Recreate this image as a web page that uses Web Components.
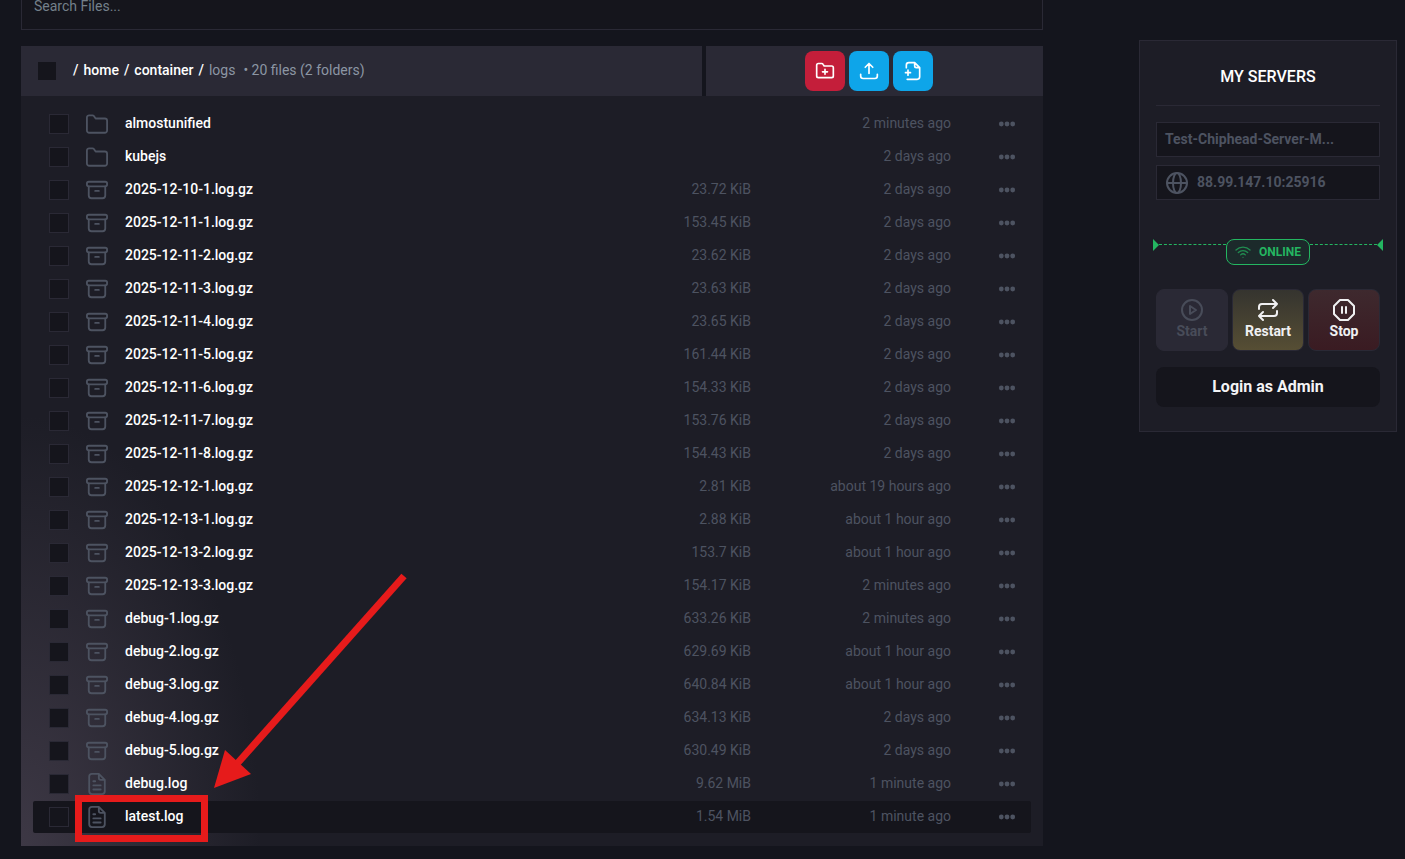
<!DOCTYPE html>
<html lang="en">
<head>
<meta charset="utf-8">
<title>File Manager</title>
<style>
    :root {
        --page: #14151d;
        --panel: #1d1d26;
        --raised: #2a2935;
        --field: #15151c;
        --muted: #4d5361;
        --soft: #8c96a4;
        --red: #c41e3a;
        --blue: #0ea5e9;
        --green: #24b661;
    }

    body {
        margin: 0;
        background: var(--page);
        color: #fff;
        font-family: Roboto, "Liberation Sans", sans-serif;
        font-size: 14px;
        line-height: 20px;
    }
</style>
</head>
<body>
<file-page>
    <search-field slot="main"></search-field>
    <path-bar slot="main">
        <action-button icon="folder-plus" label="New folder" tone="red"></action-button>
        <action-button icon="upload" label="Upload"></action-button>
        <action-button icon="file-plus" label="New file"></action-button>
    </path-bar>
    <file-table slot="main"></file-table>
    <red-marker slot="main"></red-marker>
    <server-card slot="side">
        <span slot="title">MY SERVERS</span>
        <power-button slot="power" icon="play" tone="start" off>Start</power-button>
        <power-button slot="power" icon="repeat" tone="restart">Restart</power-button>
        <power-button slot="power" icon="pause" tone="stop">Stop</power-button>
    </server-card>
</file-page>

<script>
const ICONS = {
    'folder': '<path d="M1 19V5a2.500 2.500 0 0 1 2.500-2.500H7a2 2 0 0 1 1.600.8L10.500 6H20.500A2.500 2.500 0 0 1 23 8.500V19a2.500 2.500 0 0 1-2.500 2.500h-17A2.500 2.500 0 0 1 1 19z"/>',
    'archive': '<rect x="1" y="3" width="22" height="5" rx="2"/><path d="M3 8v10a3 3 0 0 0 3 3h12a3 3 0 0 0 3-3V8M10 13h4"/>',
    'file': '<path d="M14 1H6.500a3 3 0 0 0-3 3v16a3 3 0 0 0 3 3h11a3 3 0 0 0 3-3V7.500L14 1zM14 1v4.500a2 2 0 0 0 2 2h4.500M8 9h2M8 13.500h8M8 18h8"/>',
    'dots': '<g fill="currentColor" stroke="none"><circle cx="6.300" cy="12" r="2.400"/><circle cx="12" cy="12" r="2.400"/><circle cx="17.700" cy="12" r="2.400"/></g>',
    'folder-plus': '<path d="M2 18V5a2 2 0 0 1 2-2h4a2 2 0 0 1 1.700 1L11 6h9a2 2 0 0 1 2 2v10a2 2 0 0 1-2 2H4a2 2 0 0 1-2-2zM12 10v6M9 13h6"/>',
    'upload': '<path d="M12 15V3M7.500 7.500L12 3l4.500 4.500M2 16v2a3 3 0 0 0 3 3h14a3 3 0 0 0 3-3v-2"/>',
    'file-plus': '<path d="M4 8V5a3 3 0 0 1 3-3h7l6 6v11a3 3 0 0 1-3 3H5M14 2v4a2 2 0 0 0 2 2h4M6 11v6M3 14h6"/>',
    'globe': '<circle cx="12" cy="12" r="10"/><ellipse cx="12" cy="12" rx="4" ry="10"/><path d="M2 12h20"/>',
    'wifi': '<path d="M1.500 9a15 15 0 0 1 21 0M5 12.800a10 10 0 0 1 14 0M8.500 16.300a5 5 0 0 1 7 0M12 20h.01"/>',
    'play': '<circle cx="12" cy="12" r="10"/><path d="M10 8l6 4-6 4z"/>',
    'repeat': '<path d="M17 2l4 4-4 4M3 11V9a3 3 0 0 1 3-3h15M7 22l-4-4 4-4M21 13v2a3 3 0 0 1-3 3H3"/>',
    'pause': '<path d="M8 2h8l6 6v8l-6 6H8l-6-6V8zM10 9v6M14 9v6"/>'
};

class UiIcon extends HTMLElement {
    constructor() {
        super();
        this.attachShadow({ mode: 'open' });
    }

    connectedCallback() {
        this.shadowRoot.innerHTML = `
        <style>
            :host { display: inline-block; width: 24px; height: 24px; flex: none; }
            svg { display: block; width: 100%; height: 100%; overflow: visible; fill: none; stroke: currentColor; stroke-width: 2; stroke-linecap: round; stroke-linejoin: round; }
        </style>
        <svg viewBox="0 0 24 24" aria-hidden="true">${ICONS[this.getAttribute('name')]}</svg>
        `;
    }
}

class FilePage extends HTMLElement {
    constructor() {
        super();
        this.attachShadow({ mode: 'open' });
        this.shadowRoot.innerHTML = `
        <style>
            :host { display: flex; align-items: flex-start; gap: 96px; padding: 0 8px 12px 21px; }
            main { position: relative; flex: 1; min-width: 0; }
            aside { flex: none; width: 258px; padding-top: 40px; box-sizing: border-box; }
        </style>
        <main><slot name="main"></slot></main>
        <aside><slot name="side"></slot></aside>
        `;
    }
}

class SearchField extends HTMLElement {
    constructor() {
        super();
        this.attachShadow({ mode: 'open' });
        // the field is scrolled half out of view, so it hangs from the bottom of its box
        this.shadowRoot.innerHTML = `
        <style>
            :host { display: flex; align-items: flex-end; height: 30px; overflow: hidden; margin-bottom: 16px; }
            input { box-sizing: border-box; flex: none; width: 100%; height: 48px; padding: 0 12px; border: 1px solid var(--raised); border-radius: 0; background: var(--field); color: #fff; font: inherit; outline: 0; }
            input::placeholder { color: #74808a; opacity: 1; }
        </style>
        <input type="search" placeholder="Search Files..." aria-label="Search files">
        `;
    }
}

class PathBar extends HTMLElement {
    constructor() {
        super();
        this.attachShadow({ mode: 'open' });
        this.shadowRoot.innerHTML = `
        <style>
            :host { display: grid; grid-template-columns: 1fr 337px; gap: 4px; height: 50px; }
            nav, .actions { display: flex; align-items: center; background: var(--raised); }
            nav { padding: 0 16px; }
            input { appearance: none; width: 18px; height: 18px; margin: 0 17px 0 1px; background: var(--field); }
            p { display: flex; gap: 5px; margin: 0; padding-bottom: 2px; font-weight: 500; }
            a { color: #fff; text-decoration: none; }
            .here, .count { color: var(--soft); font-weight: 400; }
            .count { margin-left: 3px; }
            .actions { justify-content: center; gap: 4px; padding-right: 12px; }
        </style>
        <nav aria-label="Path">
            <input type="checkbox" aria-label="Select all files">
            <p><span>/</span><a href="#home">home</a><span>/</span><a href="#container">container</a><span>/</span><span class="here">logs</span><span class="count">• 20 files (2 folders)</span></p>
        </nav>
        <div class="actions"><slot></slot></div>
        `;
    }
}

class ActionButton extends HTMLElement {
    constructor() {
        super();
        this.attachShadow({ mode: 'open' });
    }

    connectedCallback() {
        this.shadowRoot.innerHTML = `
        <style>
            :host { display: block; }
            button { display: flex; align-items: center; justify-content: center; width: 40px; height: 40px; padding: 0; border: 0; border-radius: 8px; background: var(--blue); color: #fff; }
            :host([tone="red"]) button { background: var(--red); }
            ui-icon { width: 20px; height: 20px; }
        </style>
        <button type="button" aria-label="${this.getAttribute('label')}"><ui-icon name="${this.getAttribute('icon')}"></ui-icon></button>
        `;
    }
}

const FILES = [
    ['folder', 'almostunified', '', '2 minutes ago'],
    ['folder', 'kubejs', '', '2 days ago'],
    ['archive', '2025-12-10-1.log.gz', '23.72 KiB', '2 days ago'],
    ['archive', '2025-12-11-1.log.gz', '153.45 KiB', '2 days ago'],
    ['archive', '2025-12-11-2.log.gz', '23.62 KiB', '2 days ago'],
    ['archive', '2025-12-11-3.log.gz', '23.63 KiB', '2 days ago'],
    ['archive', '2025-12-11-4.log.gz', '23.65 KiB', '2 days ago'],
    ['archive', '2025-12-11-5.log.gz', '161.44 KiB', '2 days ago'],
    ['archive', '2025-12-11-6.log.gz', '154.33 KiB', '2 days ago'],
    ['archive', '2025-12-11-7.log.gz', '153.76 KiB', '2 days ago'],
    ['archive', '2025-12-11-8.log.gz', '154.43 KiB', '2 days ago'],
    ['archive', '2025-12-12-1.log.gz', '2.81 KiB', 'about 19 hours ago'],
    ['archive', '2025-12-13-1.log.gz', '2.88 KiB', 'about 1 hour ago'],
    ['archive', '2025-12-13-2.log.gz', '153.7 KiB', 'about 1 hour ago'],
    ['archive', '2025-12-13-3.log.gz', '154.17 KiB', '2 minutes ago'],
    ['archive', 'debug-1.log.gz', '633.26 KiB', '2 minutes ago'],
    ['archive', 'debug-2.log.gz', '629.69 KiB', 'about 1 hour ago'],
    ['archive', 'debug-3.log.gz', '640.84 KiB', 'about 1 hour ago'],
    ['archive', 'debug-4.log.gz', '634.13 KiB', '2 days ago'],
    ['archive', 'debug-5.log.gz', '630.49 KiB', '2 days ago'],
    ['file', 'debug.log', '9.62 MiB', '1 minute ago'],
    ['file', 'latest.log', '1.54 MiB', '1 minute ago']
];

class FileTable extends HTMLElement {
    constructor() {
        super();
        this.attachShadow({ mode: 'open' });
        const rows = FILES.map(([icon, name, size, date]) => `
            <tr${name === 'latest.log' ? ' class="active"' : ''}>
                <td class="check"><input type="checkbox" aria-label="Select ${name}"></td>
                <td class="icon"><ui-icon name="${icon}"></ui-icon></td>
                <td class="name"><a href="#${name}">${name}</a></td>
                <td class="size">${size}</td>
                <td class="date">${date}</td>
                <td class="menu"><button type="button" aria-label="Actions for ${name}"><ui-icon name="dots"></ui-icon></button></td>
            </tr>`).join('');
        this.shadowRoot.innerHTML = `
        <style>
            :host { display: block; padding: 11px 12px 12px; background: radial-gradient(ellipse 240px 430px at 0 100%, #3d3845, #3d384500) var(--panel); }
            table { width: 100%; table-layout: fixed; border-spacing: 0 1px; }
            td { box-sizing: border-box; height: 32px; padding: 0; vertical-align: middle; color: var(--muted); }
            .check { width: 52px; }
            .icon { width: 40px; }
            .size, .date { width: 200px; text-align: right; }
            .menu { width: 80px; }
            .name, .size, .date { padding-bottom: 2px; }
            .active td { background: var(--field); }
            .active td:first-child { border-radius: 2px 0 0 2px; }
            .active td:last-child { border-radius: 0 2px 2px 0; }
            input { display: block; appearance: none; box-sizing: border-box; width: 20px; height: 20px; margin: 0 16px; border: 1px solid var(--raised); background: var(--field); }
            a { color: #fff; font-weight: 500; text-decoration: none; }
            ui-icon { display: block; }
            .icon ui-icon { width: 22px; height: 22px; margin-left: 1px; }
            button { display: block; margin: 0 12px 0 auto; padding: 0; border: 0; background: none; color: inherit; }
        </style>
        <table aria-label="Files">
            <tbody>${rows}</tbody>
        </table>
        `;
    }
}

class RedMarker extends HTMLElement {
    constructor() {
        super();
        this.attachShadow({ mode: 'open' });
        this.shadowRoot.innerHTML = `
        <style>
            :host { position: absolute; left: 54px; bottom: 4px; width: 340px; height: 272px; pointer-events: none; }
            svg { display: block; }
        </style>
        <svg width="340" height="272" viewBox="75 570 340 272" aria-hidden="true">
            <rect x="78.500" y="798.500" width="126" height="40" fill="none" stroke="#e61b1b" stroke-width="7"/>
            <path d="M404 576L235 766" stroke="#e61b1b" stroke-width="7"/>
            <path d="M214 788L225 750L251 774z" fill="#e61b1b"/>
        </svg>
        `;
    }
}

class ServerCard extends HTMLElement {
    constructor() {
        super();
        this.attachShadow({ mode: 'open' });
        this.shadowRoot.innerHTML = `
        <style>
            :host { display: block; padding: 0 16px 24px; border: 1px solid var(--raised); background: var(--panel); }
            h2 { margin: 0 0 16px; padding: 24px 0 16px; border-bottom: 1px solid var(--raised); font-size: 16px; font-weight: 500; line-height: 24px; text-align: center; }
            .field { box-sizing: border-box; display: flex; align-items: center; gap: 8px; height: 35px; margin-bottom: 8px; padding: 0 8px; border: 1px solid var(--raised); background: var(--field); color: var(--muted); font-weight: 700; }
            .field span { padding-bottom: 2px; }
            .status { display: flex; align-items: flex-start; margin: 39px -3px 24px; color: var(--green); }
            .arrow { width: 6px; height: 12px; background: currentColor; clip-path: polygon(0 0, 100% 50%, 0 100%); }
            .arrow.left { clip-path: polygon(100% 0, 0 50%, 100% 100%); }
            .line { flex: 1; margin-top: 5px; border-top: 1px dashed; }
            .pill { box-sizing: border-box; display: flex; align-items: center; gap: 8px; height: 26px; padding: 0 8px; border: 1px solid; border-radius: 8px; background: #1c2a2b; font-size: 12px; font-weight: 700; }
            .pill ui-icon { width: 16px; height: 16px; opacity: .7; }
            .power { display: grid; grid-template-columns: repeat(3, 1fr); gap: 4px; margin-bottom: 16px; }
            .login { display: block; width: 100%; height: 40px; padding: 0; border: 0; border-radius: 8px; background: var(--field); color: #f3f3f5; font: inherit; font-size: 16px; font-weight: 700; }
        </style>
        <h2><slot name="title"></slot></h2>
        <div class="field"><span>Test-Chiphead-Server-M...</span></div>
        <div class="field"><ui-icon name="globe"></ui-icon><span>88.99.147.10:25916</span></div>
        <div class="status">
            <i class="arrow"></i><i class="line"></i>
            <span class="pill"><ui-icon name="wifi"></ui-icon>ONLINE</span>
            <i class="line"></i><i class="arrow left"></i>
        </div>
        <div class="power"><slot name="power"></slot></div>
        <button class="login" type="button">Login as Admin</button>
        `;
    }
}

class PowerButton extends HTMLElement {
    constructor() {
        super();
        this.attachShadow({ mode: 'open' });
    }

    connectedCallback() {
        this.shadowRoot.innerHTML = `
        <style>
            :host { display: block; }
            button { box-sizing: border-box; display: flex; flex-direction: column; align-items: center; justify-content: center; width: 100%; height: 62px; padding: 0 0 2px; border: 1px solid var(--raised); border-radius: 8px; background: var(--raised); color: #f0f0f2; font: inherit; font-weight: 700; line-height: 18px; }
            button:disabled { color: #484c59; }
            :host([tone="restart"]) button { background: linear-gradient(#35342f, #564e34); }
            :host([tone="stop"]) button { background: linear-gradient(#3e292e, #3a1b22); }
        </style>
        <button type="button"${this.hasAttribute('off') ? ' disabled' : ''}><ui-icon name="${this.getAttribute('icon')}"></ui-icon><slot></slot></button>
        `;
    }
}

customElements.define('ui-icon', UiIcon);
customElements.define('file-page', FilePage);
customElements.define('search-field', SearchField);
customElements.define('path-bar', PathBar);
customElements.define('action-button', ActionButton);
customElements.define('file-table', FileTable);
customElements.define('red-marker', RedMarker);
customElements.define('server-card', ServerCard);
customElements.define('power-button', PowerButton);
</script>
</body>
</html>
